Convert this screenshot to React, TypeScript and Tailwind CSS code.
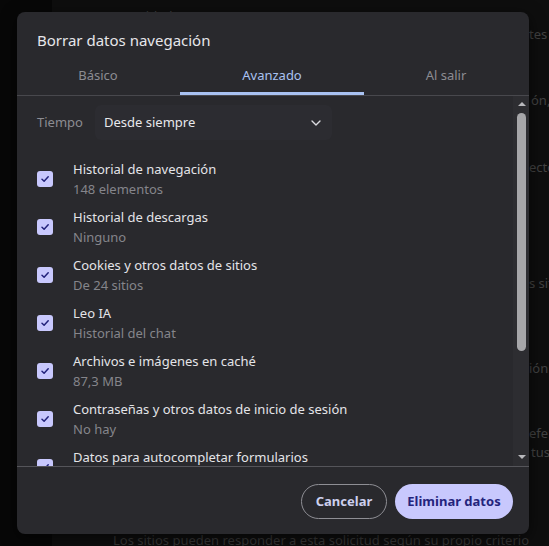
import React from "react";
import { ChevronDown } from "lucide-react";

const items = [
  { t: "Historial de navegación", s: "148 elementos" },
  { t: "Historial de descargas", s: "Ninguno" },
  { t: "Cookies y otros datos de sitios", s: "De 24 sitios" },
  { t: "Leo IA", s: "Historial del chat" },
  { t: "Archivos e imágenes en caché", s: "87,3 MB" },
  { t: "Contraseñas y otros datos de inicio de sesión", s: "No hay" },
  { t: "Datos para autocompletar formularios", s: "Ninguno" },
];

function Check() {
  return (
    <div className="w-[16px] h-[16px] rounded-[3px] bg-[#c8c8fd] flex items-center justify-center shrink-0">
      <svg width="10" height="10" viewBox="0 0 10 10" fill="none">
        <path d="M2 5.2 L4.1 7.2 L8.2 2.8" stroke="#22227a" strokeWidth="1.5" strokeLinecap="round" strokeLinejoin="round" />
      </svg>
    </div>
  );
}

export default function App() {
  const font = { fontFamily: '"Noto Sans", "Open Sans", sans-serif' };
  return (
    <div className="relative w-[549px] h-[546px] overflow-hidden flex bg-[#070707]" style={font}>
      {/* background page */}
      <div className="w-[52px] shrink-0 bg-[#070707]" />
      <div className="flex-1 flex flex-col bg-[#0e0e0e]">
        <div className="h-[530px] flex overflow-hidden">
          <div className="w-[477px] shrink-0 pl-[58px] pt-[6px]">
            <div className="text-[13px] leading-[20px] text-[#3e3e3e]">Seguridad</div>
          </div>
          <div className="flex flex-col text-[13px] leading-[20px] text-[#424242] whitespace-nowrap">
            <div className="mt-[24px]">tes</div>
            <div className="mt-[46px] pl-[2px]">ón,</div>
            <div className="mt-[47px]">ecto</div>
            <div className="mt-[96px]">s sit</div>
            <div className="mt-[65px]">ión</div>
            <div className="mt-[45px]">efer</div>
            <div className="mt-[-1px] pl-[2px]">tus</div>
          </div>
        </div>
        <div className="h-[16px] pl-[61px] text-[13px] leading-[20px] text-[#373737] whitespace-nowrap">
          Los sitios pueden responder a esta solicitud según su propio criterio
        </div>
      </div>

      {/* dialog */}
      <div className="absolute left-[17px] top-[12px] w-[512px] h-[522px] rounded-[8px] bg-[#29292d] shadow-[0_4px_16px_rgba(0,0,0,0.6)] flex flex-col overflow-hidden">
        <div className="h-[47px] pl-[20px] pt-[19px] text-[15px] leading-[18px] text-[#e6e6ea]">
          Borrar datos navegación
        </div>
        <div className="h-[37px] border-b border-[#48484d]">
          <div className="ml-[-6px] w-[522px] h-full grid grid-cols-3">
            <div className="text-center pt-[6px] text-[13px] leading-[20px] text-[#8c8c92]">Básico</div>
            <div className="relative text-center pt-[6px] text-[13px] leading-[20px] text-[#a9c2f2]">
              Avanzado
              <div className="absolute bottom-0 left-[-5px] right-[-5px] h-[3px] bg-[#a9c2f2]" />
            </div>
            <div className="text-center pt-[6px] text-[13px] leading-[20px] text-[#8c8c92]">Al salir</div>
          </div>
        </div>

        <div className="h-[370px] flex overflow-hidden">
          <div className="flex-1 overflow-hidden pl-[20px] pt-[9px]">
            <div className="h-[35px] flex items-center">
              <div className="w-[58px] text-[13px] text-[#8c8c92]">Tiempo</div>
              <div className="w-[237px] h-[35px] rounded-[6px] bg-[#2c2c31] flex items-center justify-between pl-[9px] pr-[8px]">
                <span className="text-[13px] text-[#e8e8ec]">Desde siempre</span>
                <ChevronDown size={16} strokeWidth={2} color="#dcdce0" />
              </div>
            </div>
            <div className="mt-[15px] flex flex-col">
              {items.map((it) => (
                <div key={it.t} className="h-[48px] flex items-center shrink-0">
                  <Check />
                  <div className="pl-[20px] flex flex-col whitespace-nowrap">
                    <div className="text-[13px] leading-[20px] text-[#e4e4e8]">{it.t}</div>
                    <div className="text-[13px] leading-[20px] text-[#85858b]">{it.s}</div>
                  </div>
                </div>
              ))}
            </div>
          </div>
          <div className="w-[16px] shrink-0 bg-[#2d2d31] flex flex-col items-center">
            <svg width="10" height="6" viewBox="0 0 10 6" className="mt-[5px] ml-[2px]">
              <path d="M1 5 L5 1 L9 5 Z" fill="#b8b8bc" />
            </svg>
            <div className="mt-[6px] ml-[1px] w-[9px] h-[238px] rounded-full bg-[#a6a6a9]" />
            <div className="flex-1" />
            <svg width="10" height="6" viewBox="0 0 10 6" className="mb-[6px] ml-[2px]">
              <path d="M1 1 L5 5 L9 1 Z" fill="#b8b8bc" />
            </svg>
          </div>
        </div>

        <div className="flex-1 border-t border-[#55555a] flex justify-end items-start pt-[17px] pr-[16px] gap-[8px]">
          <button className="h-[35px] w-[86px] rounded-full border border-[#8e8e94] text-[13px] font-bold text-[#cdd0ee]">
            Cancelar
          </button>
          <button className="h-[35px] w-[118px] rounded-full bg-[#c8c8fd] text-[13px] font-bold text-[#24247c]">
            Eliminar datos
          </button>
        </div>
      </div>
    </div>
  );
}
